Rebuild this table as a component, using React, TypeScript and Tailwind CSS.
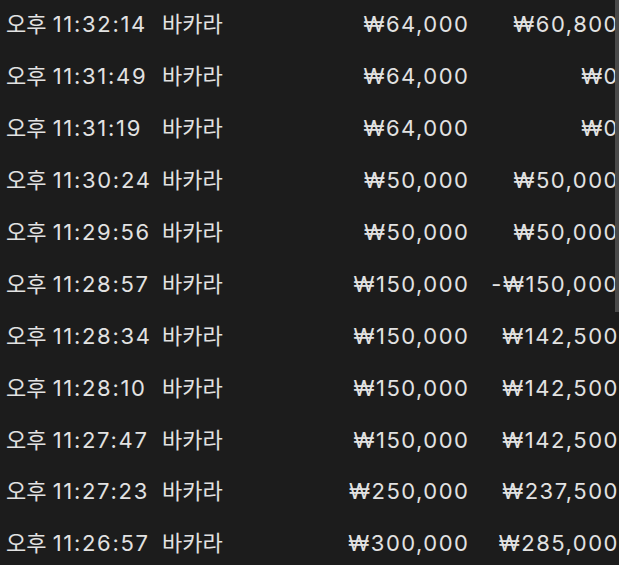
const rows = [
  { time: '11:32:14', game: '바카라', bet: '₩64,000', result: '₩60,800' },
  { time: '11:31:49', game: '바카라', bet: '₩64,000', result: '₩0' },
  { time: '11:31:19', game: '바카라', bet: '₩64,000', result: '₩0' },
  { time: '11:30:24', game: '바카라', bet: '₩50,000', result: '₩50,000' },
  { time: '11:29:56', game: '바카라', bet: '₩50,000', result: '₩50,000' },
  { time: '11:28:57', game: '바카라', bet: '₩150,000', result: '-₩150,000' },
  { time: '11:28:34', game: '바카라', bet: '₩150,000', result: '₩142,500' },
  { time: '11:28:10', game: '바카라', bet: '₩150,000', result: '₩142,500' },
  { time: '11:27:47', game: '바카라', bet: '₩150,000', result: '₩142,500' },
  { time: '11:27:23', game: '바카라', bet: '₩250,000', result: '₩237,500' },
  { time: '11:26:57', game: '바카라', bet: '₩300,000', result: '₩285,000' },
];

export default function App() {
  return (
    <div
      className="relative h-[565px] w-[619px] overflow-hidden bg-[#1c1c1c] text-[22px] text-[#e2e2e2]"
      style={{ fontFamily: 'Inter, "Noto Sans CJK KR", sans-serif' }}
    >
      {/* 기록 목록 */}
      <div className="-mt-[1px] flex flex-col">
        {rows.map((r, i) => (
          <div key={i} className="flex h-[51.9px] items-center pl-[6px] whitespace-nowrap">
            <span className="w-[156px]">
              오후 <span className="tracking-[1.7px]">{r.time}</span>
            </span>
            <span className="w-[160px]">{r.game}</span>
            <span className="w-[147.5px] text-right tracking-[1.5px]">{r.bet}</span>
            <span className="w-[149.5px] text-right tracking-[1.5px]">{r.result}</span>
          </div>
        ))}
      </div>

      {/* 스크롤바 */}
      <div className="absolute right-0 top-0 h-[312px] w-[4px] bg-[#4a4a4a]" />
    </div>
  );
}
